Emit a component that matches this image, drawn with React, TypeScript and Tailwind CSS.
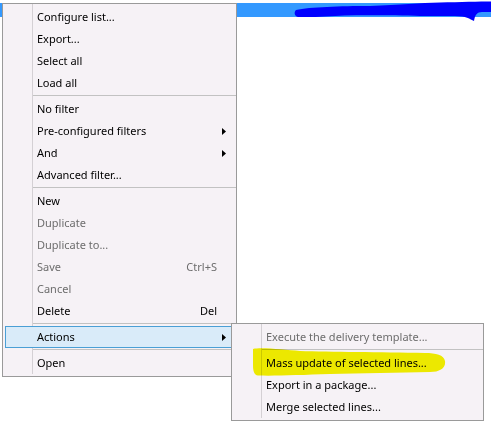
import React from "react";

type Item =
  | { sep: true }
  | { sep?: false; label: string; disabled?: boolean; shortcut?: string; sub?: boolean; hot?: boolean };

const mainItems: Item[] = [
  { label: "Configure list..." },
  { label: "Export..." },
  { label: "Select all" },
  { label: "Load all" },
  { sep: true },
  { label: "No filter" },
  { label: "Pre-configured filters", sub: true },
  { label: "And", sub: true },
  { label: "Advanced filter..." },
  { sep: true },
  { label: "New" },
  { label: "Duplicate", disabled: true },
  { label: "Duplicate to...", disabled: true },
  { label: "Save", disabled: true, shortcut: "Ctrl+S" },
  { label: "Cancel", disabled: true },
  { label: "Delete", shortcut: "Del" },
  { sep: true },
  { label: "Actions", sub: true, hot: true },
  { sep: true },
  { label: "Open" },
];

const subItems: Item[] = [
  { label: "Execute the delivery template...", disabled: true },
  { sep: true },
  { label: "Mass update of selected lines..." },
  { label: "Export in a package..." },
  { label: "Merge selected lines..." },
];

function Arrow() {
  return (
    <svg className="absolute right-[7px] top-[7px]" width="4" height="7" viewBox="0 0 4 7">
      <polygon points="0,0 4,3.5 0,7" fill="#000" />
    </svg>
  );
}

function Menu({ items }: { items: Item[] }) {
  return (
    <div className="relative flex flex-col border border-[#9a9a9a] bg-[#f6f2f6] p-[2px]">
      <div className="absolute left-[29px] top-0 bottom-[2px] w-px bg-[#d4d0d4]" />
      {items.map((it, i) =>
        it.sep ? (
          <div key={i} className="h-[4px] pt-[1px]">
            <div className="ml-[28px] -mr-[2px] h-px bg-[#c2c2c2]" />
          </div>
        ) : (
          <div
            key={i}
            className={
              "relative flex h-[22px] items-center border pb-[1px] pl-[31px] pr-[16px] whitespace-nowrap " +
              (it.hot ? "border-[#4a9fd5] bg-[#d9ebf9] " : "border-transparent ") +
              (it.disabled ? "text-[#6d6d6d]" : "text-black")
            }
          >
            <span>{it.label}</span>
            {it.shortcut && <span className="ml-auto">{it.shortcut}</span>}
            {it.sub && <Arrow />}
          </div>
        )
      )}
    </div>
  );
}

export default function App() {
  return (
    <div
      className="relative h-[422px] w-[491px] overflow-hidden bg-white text-[11px] leading-none"
      style={{ fontFamily: '"Noto Sans", "Open Sans", sans-serif' }}
    >
      <div className="mt-[3px] h-[14px] bg-[#3399ff]" />
      <svg className="absolute left-0 top-0" width="491" height="30" viewBox="0 0 491 30">
        <path
          d="M296,10 C310,7 340,6 370,6 C400,5 420,3 440,2.5 C460,2 480,1.5 491,1.5 L491,12 L482,12 C477,12 475,15 474,21 C470,19 466,16 455,16 L420,16 C400,15.5 370,15 345,15.5 C330,16 315,17.5 298,17 C294,16 294,12 296,10 Z"
          fill="#0000ff"
        />
      </svg>

      <div className="absolute left-[2px] top-[3px] w-[235px]">
        <Menu items={mainItems} />
      </div>

      <div className="absolute left-[231px] top-[323px] w-[253px]">
        <Menu items={subItems} />
      </div>

      <svg className="pointer-events-none absolute left-0 top-0" width="491" height="422" viewBox="0 0 491 422">
        <path
          d="M253,349 C262,347 285,350 300,351 C330,352 380,352 425,353 C436,353 444,355 445,361 C446,368 440,372 430,372 C400,373 360,373 330,374 C300,375 275,376 258,375.5 C254,375 253,371 253,365 Z"
          fill="#f5f500"
          style={{ mixBlendMode: "multiply" }}
        />
      </svg>
    </div>
  );
}
